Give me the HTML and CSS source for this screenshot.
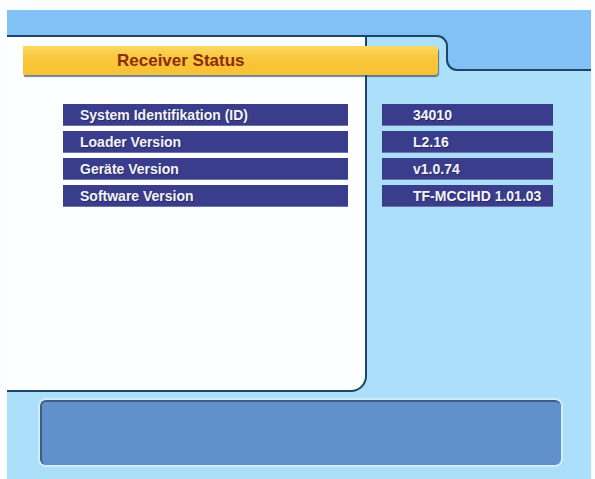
FILE: index.html
```html
<!DOCTYPE html>
<html lang="de">
<head>
    <meta charset="UTF-8">
    <meta name="viewport" content="width=device-width, initial-scale=1.0">
    <title>Receiver Status</title>
    <link rel="stylesheet" href="styles.css">
</head>
<body>

    <div class="screen">
        <div class="top-band"></div>

        <div class="body">
            <section class="panel">
                <div class="title-bar">Receiver Status</div>

                <div class="rows">
                    <div class="row">System Identifikation (ID)</div>
                    <div class="row">Loader Version</div>
                    <div class="row">Geräte Version</div>
                    <div class="row">Software Version</div>
                </div>
            </section>

            <aside class="side">
                <!-- step between the panel edge and the tab on the right -->
                <svg class="side-head" width="224" height="37" viewBox="0 0 224 37">
                    <rect width="224" height="37" fill="#82c1f5"/>
                    <path d="M0 1 H70 A10 10 0 0 1 80 11 V25 A10 10 0 0 0 90 35 H224 V37 H0 Z" fill="#acdff9"/>
                    <path d="M0 1 H70 A10 10 0 0 1 80 11 V25 A10 10 0 0 0 90 35 H224" fill="none" stroke="#1d4566" stroke-width="2"/>
                </svg>

                <div class="rows values">
                    <div class="row">34010</div>
                    <div class="row">L2.16</div>
                    <div class="row">v1.0.74</div>
                    <div class="row">TF-MCCIHD 1.01.03</div>
                </div>
            </aside>
        </div>

        <div class="footer">
            <div class="info-box"></div>
        </div>
    </div>

</body>
</html>
```

FILE: styles.css
```css
body {
    margin: 0;
    background-color: #fbfdfe;
    font-family: 'Liberation Sans', Arial, sans-serif;
}

.screen {
    margin: 10px 4px 0 7px;
    height: 469px;
    background-color: #acdff9;
    display: flex;
    flex-direction: column;
}

.top-band {
    height: 25px;
    background-color: #82c1f5;
}

.body {
    display: flex;
}

.panel {
    box-sizing: border-box;
    width: 360px;
    height: 357px;
    padding-top: 9px;
    background-color: #fdfeff;
    border-top: 2px solid #1d4566;
    border-right: 2px solid #1d4566;
    border-bottom: 2px solid #1d4566;
    border-bottom-right-radius: 16px;
}

.title-bar {
    position: relative;
    z-index: 1;
    box-sizing: border-box;
    width: 415px;
    height: 29px;
    margin-left: 16px;
    padding-left: 94px;
    line-height: 29px;
    font-size: 17px;
    font-weight: bold;
    color: #8b2b12;
    background: linear-gradient(#fcd865, #f9c73b 40%, #f7c232);
    border-radius: 0 4px 4px 0;
    box-shadow: 1px 2px 1px rgba(40, 64, 96, 0.65);
}

.rows {
    display: flex;
    flex-direction: column;
    gap: 5px;
    width: 285px;
    margin: 29px 0 0 56px;
}

.row {
    box-sizing: border-box;
    height: 22px;
    padding-left: 17px;
    line-height: 22px;
    font-size: 14px;
    font-weight: bold;
    color: #f4f4fa;
    background-color: #393d8b;
    border-bottom: 1px solid #6f74a8;
    text-shadow: 1px 1px 0 rgba(0, 0, 0, 0.3);
    white-space: nowrap;
}

.side {
    flex: 1;
}

.side-head {
    display: block;
}

.values {
    width: 171px;
    margin: 32px 0 0 15px;
}

.values .row {
    padding-left: 31px;
}

.footer {
    padding: 8px 0 0 33px;
}

.info-box {
    box-sizing: border-box;
    width: 521px;
    height: 65px;
    background-color: #6191cb;
    border-top: 2px solid #3d5d86;
    border-left: 2px solid #3d5d86;
    border-radius: 6px;
    box-shadow: 0 0 0 2px #d2edfa;
}
```
